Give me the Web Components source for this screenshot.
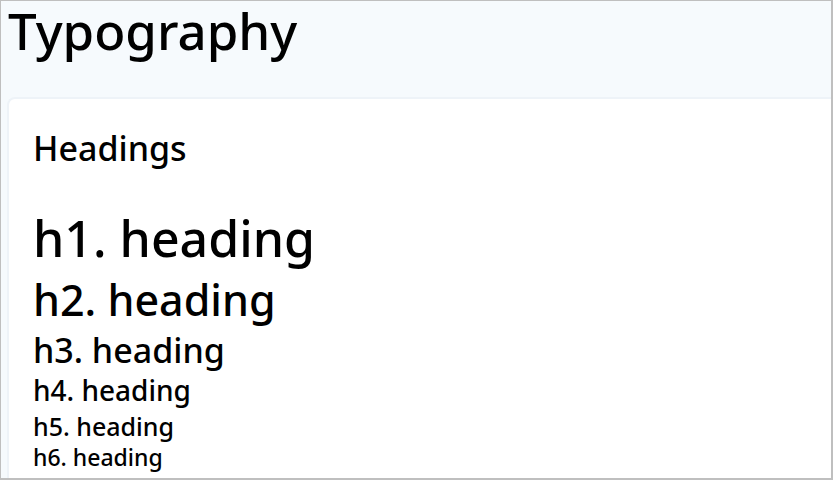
<!DOCTYPE html>
<html lang="en">
<head>
<meta charset="utf-8">
<title>Typography</title>
<style>
html, body { height: 100%; margin: 0; }
body { font-family: "Segoe UI", "Noto Sans", "Open Sans", sans-serif; color: #000; }
</style>
</head>
<body>
<typography-page>
  <section-card label="Headings">
    <heading-sample level="1"></heading-sample>
    <heading-sample level="2"></heading-sample>
    <heading-sample level="3"></heading-sample>
    <heading-sample level="4"></heading-sample>
    <heading-sample level="5"></heading-sample>
    <heading-sample level="6"></heading-sample>
  </section-card>
</typography-page>
<script>
class TypographyPage extends HTMLElement {
  constructor() {
    super();
    this.attachShadow({ mode: "open" }).innerHTML = `
      <style>
        :host { display: flex; flex-direction: column; box-sizing: border-box; height: 100vh;
          overflow: hidden; background: #f6fafd; border: 2px solid #bfbfbf; border-width: 1px 2px 2px 1px; }
        h1 { margin: 0 0 38px; padding-left: 7px; font-size: 51px; line-height: 58px; font-weight: 500; }
        main { flex: 1; display: flex; margin-left: 6px; }
        ::slotted(*) { flex: 1; }
      </style>
      <h1>Typography</h1>
      <main><slot></slot></main>`;
  }
}
class SectionCard extends HTMLElement {
  connectedCallback() {
    this.attachShadow({ mode: "open" }).innerHTML = `
      <style>
        :host { display: block; box-sizing: border-box; background: #fff; padding: 25px 24px;
          border: 2px solid #eef3f8; border-width: 2px 0 0 2px; border-radius: 8px 0 0 0; }
        h2 { margin: 0 0 32px; font-size: 34px; line-height: 48px; font-weight: 500; }
      </style>
      <h2>${this.getAttribute("label")}</h2>
      <slot></slot>`;
  }
}
class HeadingSample extends HTMLElement {
  connectedCallback() {
    const n = this.getAttribute("level");
    this.attachShadow({ mode: "open" }).innerHTML = `
      <style>
        :host { display: block; }
        h1, h2, h3, h4, h5, h6 { margin: 0; font-weight: 500; }
        h1 { font-size: 50px; line-height: 68px; }
        h2 { font-size: 43px; line-height: 56px; }
        h3 { font-size: 34px; line-height: 44px; }
        h4 { font-size: 28px; line-height: 36px; }
        h5 { font-size: 25px; line-height: 36px; }
        h6 { font-size: 23px; line-height: 26px; }
      </style>
      <h${n}>h${n}. heading</h${n}>`;
  }
}
customElements.define("typography-page", TypographyPage);
customElements.define("section-card", SectionCard);
customElements.define("heading-sample", HeadingSample);
</script>
</body>
</html>
